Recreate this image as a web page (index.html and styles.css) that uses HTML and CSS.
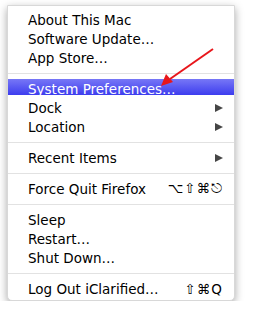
FILE: index.html
```html
<!DOCTYPE html>
<html lang="en">
  <head>
    <meta charset="UTF-8" />
    <meta name="viewport" content="width=device-width, initial-scale=1.0" />
    <title>Apple Menu</title>
    <link rel="stylesheet" href="styles.css">
  </head>

  <body>
    <div class="menu">
      <div class="menu-item">About This Mac</div>
      <div class="menu-item">Software Update…</div>
      <div class="menu-item">App Store…</div>
      <div class="separator"></div>
      <div class="menu-item selected">System Preferences…</div>
      <div class="menu-item">Dock <span class="submenu"></span></div>
      <div class="menu-item">Location <span class="submenu"></span></div>
      <div class="separator"></div>
      <div class="menu-item">Recent Items <span class="submenu"></span></div>
      <div class="separator"></div>
      <div class="menu-item">Force Quit Firefox <span class="shortcut">⌥⇧⌘⎋</span></div>
      <div class="separator"></div>
      <div class="menu-item">Sleep</div>
      <div class="menu-item">Restart…</div>
      <div class="menu-item">Shut Down…</div>
      <div class="separator"></div>
      <div class="menu-item">Log Out iClarified… <span class="shortcut">⇧⌘Q</span></div>
    </div>

    <!-- red pointer drawn over the menu -->
    <svg class="pointer" width="254" height="309" viewBox="0 0 254 309">
      <line x1="213" y1="49" x2="170" y2="79" stroke="#e8161b" stroke-width="2" />
      <polygon points="161,86 166,74 173,82" fill="#e8161b" />
    </svg>
  </body>
</html>
```

FILE: styles.css
```css
body {
  font-family: "DejaVu Sans", sans-serif;
  font-size: 13.5px;
  background-color: #ffffff;
  margin: 0;
  padding: 5px 0 0 7px;
}

.menu {
  width: 226px;
  background-color: #fff;
  border: 1px solid #d8d8d8;
  border-radius: 0 0 5px 5px;
  box-shadow: 0 3px 9px rgba(0, 0, 0, 0.35);
  padding: 4px 0 2px 0;
}

.menu-item {
  display: flex;
  justify-content: space-between;
  align-items: center;
  height: 19px;
  padding: 0 11px 0 20px;
  color: #000;
}

.menu-item.selected {
  color: #fff;
  background: linear-gradient(#7777f6, #3d3dee) no-repeat;
  background-size: 100% 16px;
}

.separator {
  height: 1px;
  background-color: #e2e2e2;
  margin: 6px 0 5px 0;
}

.submenu {
  width: 0;
  height: 0;
  border-top: 4.5px solid transparent;
  border-bottom: 4.5px solid transparent;
  border-left: 8px solid #464646;
}

.shortcut {
  letter-spacing: 1px;
}

.pointer {
  position: absolute;
  top: 0;
  left: 0;
}
```
